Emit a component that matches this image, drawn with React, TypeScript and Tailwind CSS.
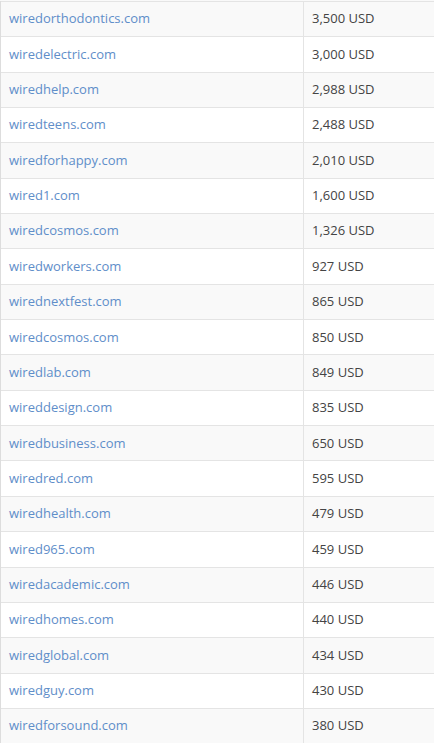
import React from 'react';

const rows: [string, string][] = [
  ['wiredorthodontics.com', '3,500 USD'],
  ['wiredelectric.com', '3,000 USD'],
  ['wiredhelp.com', '2,988 USD'],
  ['wiredteens.com', '2,488 USD'],
  ['wiredforhappy.com', '2,010 USD'],
  ['wired1.com', '1,600 USD'],
  ['wiredcosmos.com', '1,326 USD'],
  ['wiredworkers.com', '927 USD'],
  ['wirednextfest.com', '865 USD'],
  ['wiredcosmos.com', '850 USD'],
  ['wiredlab.com', '849 USD'],
  ['wireddesign.com', '835 USD'],
  ['wiredbusiness.com', '650 USD'],
  ['wiredred.com', '595 USD'],
  ['wiredhealth.com', '479 USD'],
  ['wired965.com', '459 USD'],
  ['wiredacademic.com', '446 USD'],
  ['wiredhomes.com', '440 USD'],
  ['wiredglobal.com', '434 USD'],
  ['wiredguy.com', '430 USD'],
  ['wiredforsound.com', '380 USD'],
];

export default function App() {
  return (
    <div className="w-[434px] h-[743px] overflow-hidden bg-white" style={{ fontFamily: '"Open Sans", sans-serif' }}>
      <div className="h-[1px] bg-[#f9f9f9]" />
      <div className="border-l border-[#dddddd]">
        {rows.map(([domain, price], i) => (
          <div
            key={i}
            className={`flex h-[35.35px] border-t border-[#e4e4e4] text-[13px] ${i % 2 === 0 ? 'bg-[#f9f9f9]' : 'bg-white'}`}
          >
            <div className="w-[303px] shrink-0 flex items-center pl-[8px] border-r border-[#e4e4e4]">
              <a href="#" className="text-[#5f8ec9]">
                {domain}
              </a>
            </div>
            <div className="flex-1 flex items-center pl-[8px] text-[#444444]">{price}</div>
          </div>
        ))}
      </div>
    </div>
  );
}
